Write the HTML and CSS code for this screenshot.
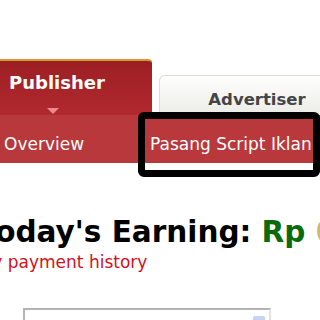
FILE: index.html
```html
<!DOCTYPE html>
<html lang="id">
<head>
  <meta charset="UTF-8" />
  <meta name="viewport" content="width=device-width, initial-scale=1.0">
  <title>Publisher Overview</title>
  <link rel="stylesheet" href="styles.css">
</head>
<body>
  <div class="page">
    <!-- Tab atas -->
    <div class="tabs">
      <div class="tab tab-publisher">
        <span class="tab-label">Publisher</span>
        <span class="tab-arrow"></span>
      </div>
      <div class="tab tab-advertiser">
        <span class="tab-label">Advertiser</span>
      </div>
    </div>

    <!-- Sub menu -->
    <div class="subnav">
      <a class="subnav-item" href="#">Overview</a>
      <a class="subnav-item subnav-script" href="#">Pasang Script Iklan</a>
    </div>

    <!-- Penghasilan -->
    <div class="earning">
      <h1 class="earning-title">Today's Earning: <span class="currency">Rp</span> <span class="amount">0</span></h1>
      <a class="history-link" href="#">View my payment history</a>
    </div>

    <div class="period-select">
      <span class="select-button"></span>
    </div>

    <!-- Tanda coretan -->
    <div class="marker"></div>
  </div>
</body>
</html>
```

FILE: styles.css
```css
/* Umum */
body {
  margin: 0;
  padding: 0;
  background-color: #fff;
  font-family: "DejaVu Sans", Verdana, sans-serif;
  overflow: hidden;
}

.page {
  position: relative;
  width: 320px;
  height: 320px;
  overflow: hidden;
  padding-top: 59px;
  box-sizing: border-box;
}

/* Tab */
.tabs {
  display: flex;
  align-items: flex-end;
  gap: 7px;
  height: 56px;
}

.tab {
  flex-shrink: 0;
  box-sizing: border-box;
  font-weight: bold;
}

.tab-publisher {
  position: relative;
  width: 152px;
  height: 56px;
  padding: 11px 0 0 9px;
  color: #fff;
  font-size: 18px;
  background: linear-gradient(#9c1f24, #b1292e);
  border-top: 2px solid #d49a2a;
  border-top-right-radius: 4px;
}

.tab-arrow {
  position: absolute;
  left: 47px;
  bottom: 1px;
  width: 0;
  height: 0;
  border-left: 6px solid transparent;
  border-right: 6px solid transparent;
  border-top: 6px solid #ec8a8c;
}

.tab-advertiser {
  width: 196px;
  height: 40px;
  padding-top: 14px;
  text-align: center;
  color: #454545;
  font-size: 16.5px;
  background: linear-gradient(#ffffff, #ebebe6);
  border: 1px solid #dcdcd6;
  border-bottom: none;
  border-top-left-radius: 6px;
}

/* Sub menu */
.subnav {
  display: flex;
  gap: 66px;
  height: 48px;
  padding: 19px 0 0 4px;
  box-sizing: border-box;
  background-color: #b8383c;
}

.subnav-item {
  color: #fff;
  font-size: 17px;
  text-decoration: none;
}

/* Penghasilan */
.earning {
  margin-top: 52px;
}

.earning-title {
  margin: 0 0 0 -21px;
  font-size: 29.5px;
  line-height: 35px;
  color: #000;
  white-space: nowrap;
}

.currency {
  color: #0b6b0b;
}

.amount {
  color: #cdb878;
}

.history-link {
  display: block;
  margin: 2px 0 0 -70px;
  font-size: 17px;
  line-height: 20px;
  color: #d4101c;
  text-decoration: none;
  white-space: nowrap;
}

.period-select {
  position: relative;
  width: 248px;
  height: 30px;
  margin: 36px 0 0 23px;
  box-sizing: border-box;
  border: 2px solid #b4b4b4;
  border-bottom: none;
  border-right-color: #e2e2e2;
}

.select-button {
  position: absolute;
  right: 4px;
  top: 6px;
  width: 12px;
  height: 14px;
  background-color: #c5d3f6;
  border-radius: 2px;
}

/* Coretan hitam di atas menu */
.marker {
  position: absolute;
  left: 138px;
  top: 112px;
  width: 182px;
  height: 65px;
  box-sizing: border-box;
  border: 7px solid #000;
  border-radius: 6px;
}
```
